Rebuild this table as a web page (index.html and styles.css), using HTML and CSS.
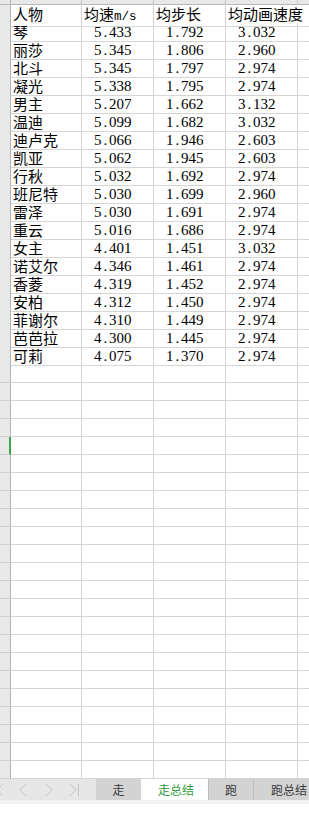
FILE: index.html
```html
<!DOCTYPE html>
<html lang="zh-CN">
<head>
<meta charset="utf-8">
<title>走总结</title>
<link rel="stylesheet" href="styles.css">
</head>
<body>
<div class="sheet">
  <div class="row top"><div class="rh"></div><div class="c"></div><div class="c"></div><div class="c"></div><div class="c"></div><div class="c"></div></div>
  <div class="row"><div class="rh"></div><div class="c t">人物</div><div class="c t">均速<span class="half">m/s</span></div><div class="c t">均步长</div><div class="c t spill">均动画速度</div><div class="c"></div></div>
  <div class="row"><div class="rh"></div><div class="c t">琴</div><div class="c n">5<span class="dot">.</span>433</div><div class="c n">1<span class="dot">.</span>792</div><div class="c n">3<span class="dot">.</span>032</div><div class="c"></div></div>
  <div class="row"><div class="rh"></div><div class="c t">丽莎</div><div class="c n">5<span class="dot">.</span>345</div><div class="c n">1<span class="dot">.</span>806</div><div class="c n">2<span class="dot">.</span>960</div><div class="c"></div></div>
  <div class="row"><div class="rh"></div><div class="c t">北斗</div><div class="c n">5<span class="dot">.</span>345</div><div class="c n">1<span class="dot">.</span>797</div><div class="c n">2<span class="dot">.</span>974</div><div class="c"></div></div>
  <div class="row"><div class="rh"></div><div class="c t">凝光</div><div class="c n">5<span class="dot">.</span>338</div><div class="c n">1<span class="dot">.</span>795</div><div class="c n">2<span class="dot">.</span>974</div><div class="c"></div></div>
  <div class="row"><div class="rh"></div><div class="c t">男主</div><div class="c n">5<span class="dot">.</span>207</div><div class="c n">1<span class="dot">.</span>662</div><div class="c n">3<span class="dot">.</span>132</div><div class="c"></div></div>
  <div class="row"><div class="rh"></div><div class="c t">温迪</div><div class="c n">5<span class="dot">.</span>099</div><div class="c n">1<span class="dot">.</span>682</div><div class="c n">3<span class="dot">.</span>032</div><div class="c"></div></div>
  <div class="row"><div class="rh"></div><div class="c t">迪卢克</div><div class="c n">5<span class="dot">.</span>066</div><div class="c n">1<span class="dot">.</span>946</div><div class="c n">2<span class="dot">.</span>603</div><div class="c"></div></div>
  <div class="row"><div class="rh"></div><div class="c t">凯亚</div><div class="c n">5<span class="dot">.</span>062</div><div class="c n">1<span class="dot">.</span>945</div><div class="c n">2<span class="dot">.</span>603</div><div class="c"></div></div>
  <div class="row"><div class="rh"></div><div class="c t">行秋</div><div class="c n">5<span class="dot">.</span>032</div><div class="c n">1<span class="dot">.</span>692</div><div class="c n">2<span class="dot">.</span>974</div><div class="c"></div></div>
  <div class="row"><div class="rh"></div><div class="c t">班尼特</div><div class="c n">5<span class="dot">.</span>030</div><div class="c n">1<span class="dot">.</span>699</div><div class="c n">2<span class="dot">.</span>960</div><div class="c"></div></div>
  <div class="row"><div class="rh"></div><div class="c t">雷泽</div><div class="c n">5<span class="dot">.</span>030</div><div class="c n">1<span class="dot">.</span>691</div><div class="c n">2<span class="dot">.</span>974</div><div class="c"></div></div>
  <div class="row"><div class="rh"></div><div class="c t">重云</div><div class="c n">5<span class="dot">.</span>016</div><div class="c n">1<span class="dot">.</span>686</div><div class="c n">2<span class="dot">.</span>974</div><div class="c"></div></div>
  <div class="row"><div class="rh"></div><div class="c t">女主</div><div class="c n">4<span class="dot">.</span>401</div><div class="c n">1<span class="dot">.</span>451</div><div class="c n">3<span class="dot">.</span>032</div><div class="c"></div></div>
  <div class="row"><div class="rh"></div><div class="c t">诺艾尔</div><div class="c n">4<span class="dot">.</span>346</div><div class="c n">1<span class="dot">.</span>461</div><div class="c n">2<span class="dot">.</span>974</div><div class="c"></div></div>
  <div class="row"><div class="rh"></div><div class="c t">香菱</div><div class="c n">4<span class="dot">.</span>319</div><div class="c n">1<span class="dot">.</span>452</div><div class="c n">2<span class="dot">.</span>974</div><div class="c"></div></div>
  <div class="row"><div class="rh"></div><div class="c t">安柏</div><div class="c n">4<span class="dot">.</span>312</div><div class="c n">1<span class="dot">.</span>450</div><div class="c n">2<span class="dot">.</span>974</div><div class="c"></div></div>
  <div class="row"><div class="rh"></div><div class="c t">菲谢尔</div><div class="c n">4<span class="dot">.</span>310</div><div class="c n">1<span class="dot">.</span>449</div><div class="c n">2<span class="dot">.</span>974</div><div class="c"></div></div>
  <div class="row"><div class="rh"></div><div class="c t">芭芭拉</div><div class="c n">4<span class="dot">.</span>300</div><div class="c n">1<span class="dot">.</span>445</div><div class="c n">2<span class="dot">.</span>974</div><div class="c"></div></div>
  <div class="row"><div class="rh"></div><div class="c t">可莉</div><div class="c n">4<span class="dot">.</span>075</div><div class="c n">1<span class="dot">.</span>370</div><div class="c n">2<span class="dot">.</span>974</div><div class="c"></div></div>
  <div class="row"><div class="rh"></div><div class="c"></div><div class="c"></div><div class="c"></div><div class="c"></div><div class="c"></div></div>
  <div class="row"><div class="rh"></div><div class="c"></div><div class="c"></div><div class="c"></div><div class="c"></div><div class="c"></div></div>
  <div class="row"><div class="rh"></div><div class="c"></div><div class="c"></div><div class="c"></div><div class="c"></div><div class="c"></div></div>
  <div class="row"><div class="rh"></div><div class="c"></div><div class="c"></div><div class="c"></div><div class="c"></div><div class="c"></div></div>
  <div class="row"><div class="rh active"></div><div class="c"></div><div class="c"></div><div class="c"></div><div class="c"></div><div class="c"></div></div>
  <div class="row"><div class="rh"></div><div class="c"></div><div class="c"></div><div class="c"></div><div class="c"></div><div class="c"></div></div>
  <div class="row"><div class="rh"></div><div class="c"></div><div class="c"></div><div class="c"></div><div class="c"></div><div class="c"></div></div>
  <div class="row"><div class="rh"></div><div class="c"></div><div class="c"></div><div class="c"></div><div class="c"></div><div class="c"></div></div>
  <div class="row"><div class="rh"></div><div class="c"></div><div class="c"></div><div class="c"></div><div class="c"></div><div class="c"></div></div>
  <div class="row"><div class="rh"></div><div class="c"></div><div class="c"></div><div class="c"></div><div class="c"></div><div class="c"></div></div>
  <div class="row"><div class="rh"></div><div class="c"></div><div class="c"></div><div class="c"></div><div class="c"></div><div class="c"></div></div>
  <div class="row"><div class="rh"></div><div class="c"></div><div class="c"></div><div class="c"></div><div class="c"></div><div class="c"></div></div>
  <div class="row"><div class="rh"></div><div class="c"></div><div class="c"></div><div class="c"></div><div class="c"></div><div class="c"></div></div>
  <div class="row"><div class="rh"></div><div class="c"></div><div class="c"></div><div class="c"></div><div class="c"></div><div class="c"></div></div>
  <div class="row"><div class="rh"></div><div class="c"></div><div class="c"></div><div class="c"></div><div class="c"></div><div class="c"></div></div>
  <div class="row"><div class="rh"></div><div class="c"></div><div class="c"></div><div class="c"></div><div class="c"></div><div class="c"></div></div>
  <div class="row"><div class="rh"></div><div class="c"></div><div class="c"></div><div class="c"></div><div class="c"></div><div class="c"></div></div>
  <div class="row"><div class="rh"></div><div class="c"></div><div class="c"></div><div class="c"></div><div class="c"></div><div class="c"></div></div>
  <div class="row"><div class="rh"></div><div class="c"></div><div class="c"></div><div class="c"></div><div class="c"></div><div class="c"></div></div>
  <div class="row"><div class="rh"></div><div class="c"></div><div class="c"></div><div class="c"></div><div class="c"></div><div class="c"></div></div>
  <div class="row"><div class="rh"></div><div class="c"></div><div class="c"></div><div class="c"></div><div class="c"></div><div class="c"></div></div>
  <div class="row"><div class="rh"></div><div class="c"></div><div class="c"></div><div class="c"></div><div class="c"></div><div class="c"></div></div>
  <div class="row"><div class="rh"></div><div class="c"></div><div class="c"></div><div class="c"></div><div class="c"></div><div class="c"></div></div>
</div>
<div class="tabbar">
  <div class="nav">
    <svg width="96" height="21" viewBox="0 0 96 21" aria-hidden="true">
      <polyline points="3,5 -3,11 3,17" />
      <polyline points="26,5 20,11 26,17" />
      <polyline points="46,5 52,11 46,17" />
      <polyline points="70,5 76,11 70,17" />
      <line x1="78.5" y1="5" x2="78.5" y2="17" />
    </svg>
  </div>
  <div class="tab w45">走</div>
  <div class="tab current">走总结</div>
  <div class="tab w45 sep">跑</div>
  <div class="tab last sep">跑总结</div>
</div>
<div class="status"></div>
</body>
</html>
```
FILE: styles.css
```css
* { box-sizing: border-box; }

html, body {
  margin: 0;
  padding: 0;
  background: #ffffff;
}

body {
  width: 309px;
  height: 822px;
  overflow: hidden;
  font-family: "Liberation Serif", "Noto Sans CJK SC", serif;
  font-size: 15px;
  color: #000;
}

.sheet {
  display: flex;
  flex-direction: column;
}

.row {
  display: grid;
  grid-template-columns: 11px 71px 72px 72px 72px 11px;
  height: 18px;
}

.row.top {
  height: 5px;
}

.c {
  border-right: 1px solid #d5d5d5;
  border-bottom: 1px solid #d5d5d5;
  white-space: nowrap;
  line-height: 17px;
  padding-left: 2px;
}

.c:last-child {
  border-right: none;
}

.row.top .c {
  background: #e8e8e8;
  border-bottom-color: #b9b9b9;
  border-right-color: #c9c9c9;
}

.rh {
  background: #e8e8e8;
  border-right: 1px solid #b4b4b4;
  border-bottom: 1px solid #d0d0d0;
}

.row.top .rh {
  border-bottom-color: #b9b9b9;
}

.rh.active {
  border-right: 2px solid #3aa54a;
}

.t {
  font-family: "Noto Sans CJK SC", sans-serif;
}

.half {
  font-family: "Liberation Mono", monospace;
  font-size: 12.5px;
}

.spill {
  border-right-color: transparent;
}

.n {
  padding-left: 12px;
  padding-top: 1px;
}

.dot {
  display: inline-block;
  width: 7.5px;
  text-align: center;
}

.tabbar {
  display: flex;
  height: 21px;
  background: #e6e6e6;
  font-family: "Noto Sans CJK SC", sans-serif;
  font-size: 12px;
}

.nav {
  width: 96px;
  flex: none;
}

.nav svg {
  display: block;
  fill: none;
  stroke: #c6c6c6;
  stroke-width: 1;
}

.tab {
  display: flex;
  align-items: center;
  justify-content: center;
  background: #d3d3d3;
  color: #3a3a3a;
  line-height: 21px;
  flex: none;
}

.tab.w45 {
  width: 45px;
}

.tab.current {
  width: 67px;
  background: #ffffff;
  color: #2f9c3c;
  padding-left: 3px;
}

.tab.sep {
  border-left: 1px solid #bdbdbd;
}

.tab.last {
  flex: 1;
  justify-content: flex-start;
  padding-left: 17px;
}

.status {
  height: 4px;
  background: #f1f1f1;
}
```
